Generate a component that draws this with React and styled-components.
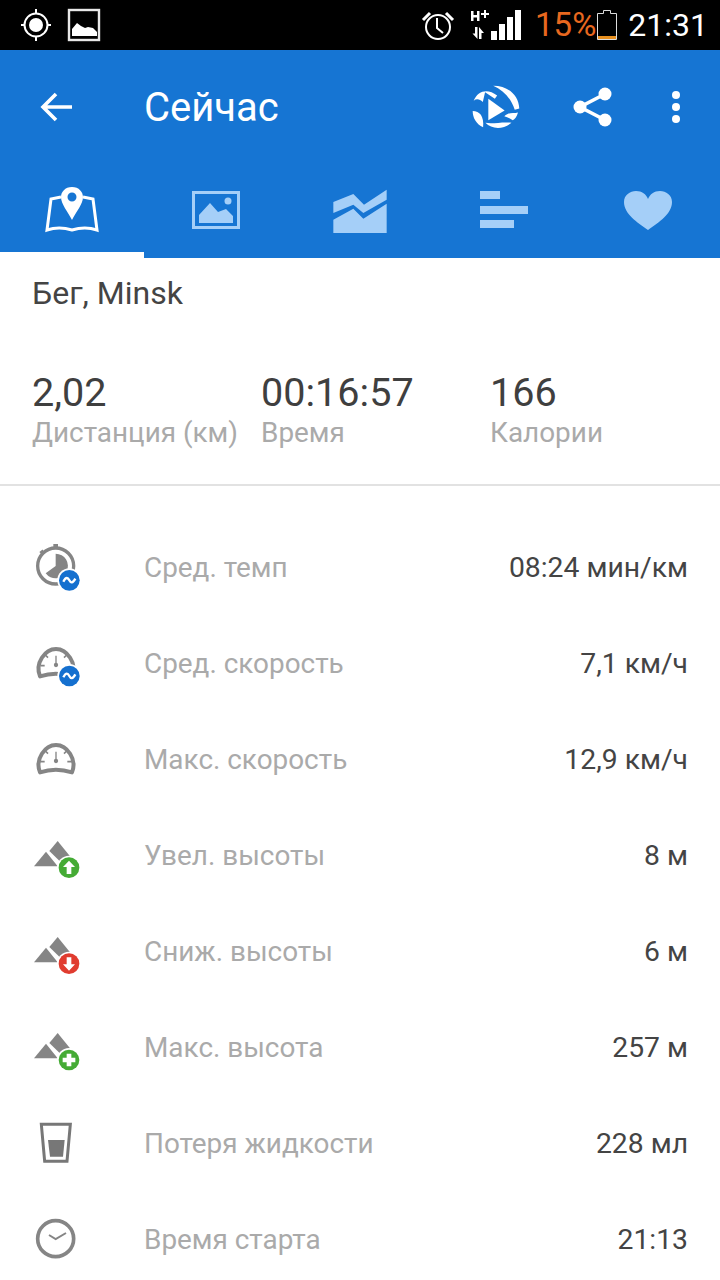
import React from "react";
import styled, { createGlobalStyle } from "styled-components";

const Global = createGlobalStyle`
  html, body { margin: 0; padding: 0; background: #fff; }
  body { font-family: Roboto, "Noto Sans", sans-serif; width: 720px; height: 1280px; overflow: hidden; }
`;
const Page = styled.div`width: 720px; height: 1280px; overflow: hidden; background: #fff;`;
const StatusBar = styled.div`
  height: 50px; background: #000; display: flex; align-items: center; padding: 0 12px 0 21px; box-sizing: border-box;
`;
const StatusGroup = styled.div`display: flex; align-items: center; gap: ${p => p.$gap || 0}px;`;
const SignalSlot = styled.div`display: flex; margin-left: 16px; margin-bottom: 2px;`;
const Spacer = styled.div`flex: 1;`;
const EndSpace = styled.div`flex: none; width: 30px;`;
const Pct = styled.span`color: #e8681f; font-size: 33px; line-height: 50px; margin-left: 14px; margin-right: 1px;`;
const Clock = styled.span`color: #fff; font-size: 32px; line-height: 50px; margin-left: 11px;`;
const AppBar = styled.div`
  height: 112px; background: #1675d3; display: flex; align-items: center; padding-top: 2px; box-sizing: border-box;
`;
const BackSlot = styled.div`width: 144px; display: flex; padding-left: 40px; box-sizing: border-box;`;
const Title = styled.div`color: #fff; font-size: 40px; flex: 1; line-height: 44px; margin-top: 1px;`;
const Action = styled.div`width: ${p => p.$w}px; margin-left: ${p => p.$ml || 0}px; display: flex; justify-content: center;`;
const Tabs = styled.div`display: flex; height: 96px; background: #1675d3;`;
const Tab = styled.div`
  width: 144px; height: 96px; box-sizing: border-box; display: flex; align-items: flex-start; justify-content: center;
  padding-top: ${p => p.$top}px;
  border-bottom: ${p => (p.$active ? "6px solid #fff" : "none")};
`;
const Header = styled.div`padding: 14px 32px 0 32px; border-bottom: 2px solid #e2e2e2; height: 228px; box-sizing: border-box;`;
const Place = styled.div`font-size: 32px; line-height: 42px; color: #444;`;
const Stats = styled.div`display: grid; grid-template-columns: 229px 229px 1fr; margin-top: 57px;`;
const StatValue = styled.div`font-size: 39.6px; line-height: 44px; color: #3f3f3f;`;
const StatLabel = styled.div`font-size: 27.9px; line-height: 34px; color: #aaa; white-space: nowrap; margin-top: 1px;`;
const List = styled.div`padding-top: 33px;`;
const Row = styled.div`height: 96px; display: flex; align-items: center; padding: 0 32px 0 20px;`;
const IconSlot = styled.div`width: 124px; height: 60px; flex: none; margin-top: 3px;`;
const RowLabel = styled.div`font-size: 27.9px; color: #aaa; flex: 1;`;
const RowValue = styled.div`font-size: 28.3px; color: #444;`;

const White = "#fff", Light = "#a5cff8", G = "#858585";

const Gps = () => (
  <svg width="30" height="34" viewBox="0 0 30 34">
    <circle cx="15" cy="17" r="11.5" fill="none" stroke={White} strokeWidth="2" />
    <circle cx="15" cy="17" r="7" fill={White} />
    <path d="M15 1v4M15 29v4M0 17h4M26 17h4" stroke={White} strokeWidth="2" />
  </svg>
);
const Pic = () => (
  <svg width="34" height="34" viewBox="0 0 34 34">
    <rect x="2" y="2" width="30" height="30" fill="none" stroke="#e8e8e8" strokeWidth="2.4" />
    <path d="M5 28V21L10 15 14 18 18 20 21 19 26 20 30 24V28Z" fill={White} />
  </svg>
);
const Alarm = () => (
  <svg width="34" height="30" viewBox="0 0 34 30" fill="none" stroke={White}>
    <circle cx="17" cy="17" r="12" strokeWidth="2" />
    <path d="M16 8v10l6 5" strokeWidth="2" />
    <path d="M2 10 9 3M32 10 25 3" strokeWidth="3" />
  </svg>
);
const Signal = () => (
  <svg width="50" height="32" viewBox="0 0 50 32" fill={White}>
    <path d="M0 3h2.500v4h3.500V3h2.500v10H6V9.500H2.500V13H0Z" />
    <path d="M13 2h2v3h3v2h-3v3h-2V7h-3V5h3Z" />
    <path d="M4 19h2.500v12L1.500 25.500H4Z" />
    <path d="M8 19l5 6h-2.500v6H8Z" />
    <rect x="20" y="23" width="6" height="9" />
    <rect x="28" y="16" width="6" height="16" />
    <rect x="36" y="9" width="6" height="23" />
    <rect x="44" y="2" width="6" height="30" />
  </svg>
);
const Battery = () => (
  <svg width="20" height="30" viewBox="0 0 20 30">
    <path d="M.5 3.500h6V.500h7v3h6v26H.500Z" fill="none" stroke="#ddd" />
    <rect x="1" y="26" width="18" height="3" fill="#e8901f" />
  </svg>
);
const Back = () => (
  <svg width="33" height="30" viewBox="0 0 33 30" fill="none" stroke={White} strokeWidth="3.6">
    <path d="M32 15H3M16 2 3 15l13 13" />
  </svg>
);
const Replay = () => (
  <svg width="48" height="44" viewBox="95 70 147 135" fill={White}>
    <path d="M145 112 195 148 145 178Z" />
    <path d="M160 72C205 72 238 100 240 142L226 146C215 110 190 85 160 72Z" />
    <path d="M100 118C115 84 145 82 172 102L165 112 135 92 128 122C118 112 108 112 100 118Z" />
    <path d="M97 150C118 150 132 165 129 200 108 190 97 172 97 150Z" />
    <path d="M136 186C160 190 190 182 216 186 190 208 155 206 136 186Z" />
    <path d="M194 166C208 152 222 158 236 154 232 168 226 174 220 178 210 172 202 168 194 166Z" />
  </svg>
);
const Share = () => (
  <svg width="40" height="40" viewBox="0 0 40 40">
    <path d="M32 7 7 20 32 33" fill="none" stroke={White} strokeWidth="3.6" />
    <circle cx="7" cy="20" r="6.500" fill={White} />
    <circle cx="32" cy="7" r="6.500" fill={White} />
    <circle cx="32" cy="33" r="6.500" fill={White} />
  </svg>
);
const Dots = () => (
  <svg width="8" height="32" viewBox="0 0 8 32" fill={White}>
    <circle cx="4" cy="4" r="4" /><circle cx="4" cy="16" r="4" /><circle cx="4" cy="28" r="4" />
  </svg>
);
const MapTab = () => (
  <svg width="54" height="46" viewBox="45 187 54 46">
    <path d="M61 197 51 199 47 230Q59 226 72 230 85 226 97 230L93 199 83 197" fill="none" stroke={White} strokeWidth="3" />
    <path fillRule="evenodd" fill={White} d="M72 187C65 187 61 192 61 197 61 204 68 212 72 220 76 212 83 204 83 197 83 192 79 187 72 187ZM72 192.500A4.500 4.500 0 1 1 72 201.500 4.500 4.500 0 1 1 72 192.500Z" />
  </svg>
);
const PicTab = () => (
  <svg width="48" height="38" viewBox="0 0 48 38">
    <rect x="1.500" y="1.500" width="45" height="35" fill="none" stroke={Light} strokeWidth="3" />
    <circle cx="36" cy="10" r="3.500" fill={Light} />
    <path d="M7 24 18 12 26 21 34 18 41 25V32H7Z" fill={Light} />
  </svg>
);
const ChartTab = () => (
  <svg width="54" height="45" viewBox="1000 50 160 135" fill={Light}>
    <path d="M1000 92 1060 68 1092 100 1160 55V85L1090 125 1060 100 1000 125Z" />
    <path d="M1000 145 1060 112 1090 142 1160 97V185H1000Z" />
  </svg>
);
const BarsTab = () => (
  <svg width="48" height="38" viewBox="0 0 48 38" fill={Light}>
    <rect width="20" height="8" /><rect y="15" width="48" height="8" /><rect y="29" width="34" height="8" />
  </svg>
);
const HeartTab = () => (
  <svg width="48" height="39" viewBox="0 0 48 39" fill={Light}>
    <path d="M24 39C13 31 0 23 0 11 0 4 6 0 12 0 18 0 22 3 24 8 26 3 30 0 36 0 42 0 48 4 48 11 48 23 35 31 24 39Z" />
  </svg>
);

const Badge = ({ x, y, fill, children }) => (
  <g>
    <circle cx={x} cy={y} r="36" fill="#fff" />
    <circle cx={x} cy={y} r="31" fill={fill} />
    {children}
  </g>
);
const Tilde = ({ x, y }) => (
  <path d={`M${x - 18} ${y + 4}C${x - 10} ${y - 12} ${x - 4} ${y - 8} ${x} ${y}S${x + 10} ${y + 10} ${x + 18} ${y - 5}`} fill="none" stroke="#fff" strokeWidth="7" />
);
const Svg = ({ children }) => <svg width="80" height="60" viewBox="0 0 240 180" style={{ display: "block" }}>{children}</svg>;

const Pace = () => (
  <Svg>
    <circle cx="107" cy="81" r="54" fill="none" stroke={G} strokeWidth="10" />
    <path d="M107 81V44A37 37 0 1 1 77 103Z" fill={G} />
    <rect x="100" y="15" width="14" height="12" fill={G} />
    <rect x="60" y="34" width="12" height="10" fill={G} transform="rotate(-40 66 39)" />
    <Badge x={148} y={124} fill="#1570cf"><Tilde x={148} y={124} /></Badge>
  </Svg>
);
const GaugeBase = () => (
  <path d="M60 124C44 85 75 42 108 42 141 42 172 85 156 124 125 114 90 114 60 124Z" fill="none" stroke={G} strokeWidth="12" strokeLinejoin="round" />
);
const Ticks = () => (
  <g stroke={G} strokeWidth="5" fill="none">
    <path d="M108 62V86" strokeWidth="4" />
    <circle cx="108" cy="90" r="4" fill={G} />
    <path d="M62 92H74M142 92H154M76 60 84 68M140 60 132 68" />
  </g>
);
const AvgSpeed = () => (
  <Svg><GaugeBase /><Ticks /><Badge x={148} y={123} fill="#1570cf"><Tilde x={148} y={123} /></Badge></Svg>
);
const MaxSpeed = () => <Svg><GaugeBase /><Ticks /></Svg>;
const Peaks = () => (
  <g fill={G}>
    <path d="M42 118 78 74 113 118Z" />
    <path d="M88 72 113 42 150 88 125 108Z" />
  </g>
);
const Up = () => (
  <Svg><Peaks /><Badge x={147} y={122} fill="#45ab35"><path d="M147 101 165 120H154V141H140V120H129Z" fill="#fff" /></Badge></Svg>
);
const Down = () => (
  <Svg><Peaks /><Badge x={147} y={122} fill="#e03c2f"><path d="M147 143 165 124H154V103H140V124H129Z" fill="#fff" /></Badge></Svg>
);
const Plus = () => (
  <Svg><Peaks /><Badge x={147} y={123} fill="#45ab35"><path d="M140 104H154V116H166V130H154V142H140V130H128V116H140Z" fill="#fff" /></Badge></Svg>
);
const Glass = () => (
  <Svg>
    <path d="M64 28H151L141 139H74Z" fill="none" stroke="#777" strokeWidth="9" />
    <path d="M84 75H134L129 125H90Z" fill="#777" />
  </Svg>
);
const Start = () => (
  <Svg>
    <circle cx="107" cy="83" r="54" fill="none" stroke={G} strokeWidth="11" />
    <path d="M87 72 107 84 138 66" fill="none" stroke={G} strokeWidth="6" />
  </Svg>
);

const rows = [
  [Pace, "Сред. темп", "08:24 мин/км"],
  [AvgSpeed, "Сред. скорость", "7,1 км/ч"],
  [MaxSpeed, "Макс. скорость", "12,9 км/ч"],
  [Up, "Увел. высоты", "8 м"],
  [Down, "Сниж. высоты", "6 м"],
  [Plus, "Макс. высота", "257 м"],
  [Glass, "Потеря жидкости", "228 мл"],
  [Start, "Время старта", "21:13"],
];
const stats = [["2,02", "Дистанция (км)"], ["00:16:57", "Время"], ["166", "Калории"]];

export default function App() {
  return (
    <Page>
      <Global />
      <StatusBar>
        <StatusGroup $gap={16}><Gps /><Pic /></StatusGroup>
        <Spacer />
        <StatusGroup>
          <Alarm />
          <SignalSlot><Signal /></SignalSlot>
          <Pct>15%</Pct>
          <Battery />
          <Clock>21:31</Clock>
        </StatusGroup>
      </StatusBar>
      <AppBar>
        <BackSlot><Back /></BackSlot>
        <Title>Сейчас</Title>
        <Action $w={49}><Replay /></Action>
        <Action $w={139} $ml={3}><Share /></Action>
        <Action $w={28}><Dots /></Action>
        <EndSpace />
      </AppBar>
      <Tabs>
        <Tab $active $top={25}><MapTab /></Tab>
        <Tab $top={29}><PicTab /></Tab>
        <Tab $top={26}><ChartTab /></Tab>
        <Tab $top={29}><BarsTab /></Tab>
        <Tab $top={29}><HeartTab /></Tab>
      </Tabs>
      <Header>
        <Place>Бег, Minsk</Place>
        <Stats>
          {stats.map(([v, l]) => (
            <div key={l}><StatValue>{v}</StatValue><StatLabel>{l}</StatLabel></div>
          ))}
        </Stats>
      </Header>
      <List>
        {rows.map(([Icon, l, v]) => (
          <Row key={l}>
            <IconSlot><Icon /></IconSlot>
            <RowLabel>{l}</RowLabel>
            <RowValue>{v}</RowValue>
          </Row>
        ))}
      </List>
    </Page>
  );
}
